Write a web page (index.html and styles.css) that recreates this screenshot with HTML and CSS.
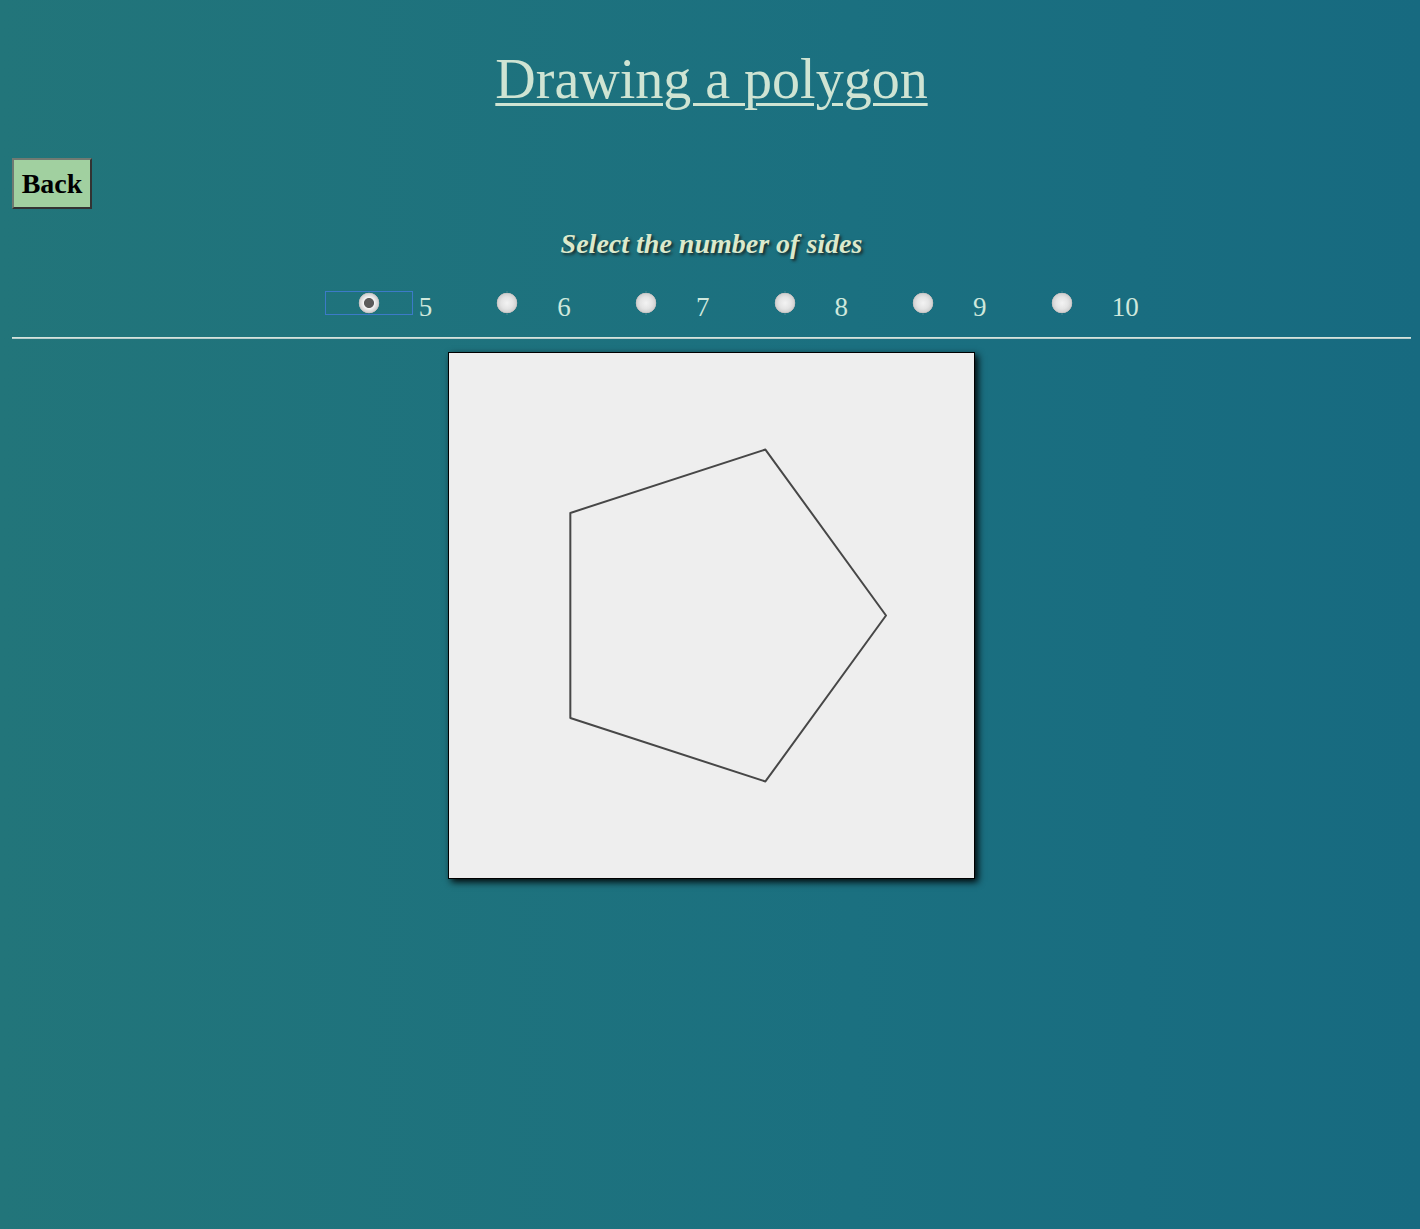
FILE: index.html
```html
<!DOCTYPE html>
<html lang="en">
<head>
<meta charset="utf-8">
<title>Drawing a polygon</title>
<link rel="stylesheet" href="styles.css">
</head>
<body>
<h1 class="title"><a href="#">Drawing a polygon</a></h1>
<div class="back-row"><button class="back">Back</button></div>
<h2 class="prompt">Select the number of sides</h2>
<div class="sides">
  <label class="side"><input type="radio" name="sides" class="radio focused" checked><span class="num">5</span></label>
  <label class="side"><input type="radio" name="sides" class="radio"><span class="num">6</span></label>
  <label class="side"><input type="radio" name="sides" class="radio"><span class="num">7</span></label>
  <label class="side"><input type="radio" name="sides" class="radio"><span class="num">8</span></label>
  <label class="side"><input type="radio" name="sides" class="radio"><span class="num">9</span></label>
  <label class="side"><input type="radio" name="sides" class="radio"><span class="num">10</span></label>
</div>
<hr class="rule">
<div class="stage">
  <svg class="canvas" width="525" height="525" viewBox="0 0 525 525">
    <polygon points="437,262.5 316.42,96.54 121.33,159.93 121.33,365.07 316.42,428.46" fill="none" stroke="#474747" stroke-width="2" stroke-linejoin="round"/>
  </svg>
</div>
</body>
</html>
```
FILE: styles.css
```css
html, body {
  margin: 0;
  min-height: 100%;
}
body {
  padding: 0 9px 0 12px;
  min-height: 1229px;
  box-sizing: border-box;
  background: linear-gradient(90deg, #22757a 0%, #1b7080 60%, #176a80 100%);
  font-family: "Liberation Serif", "Times New Roman", serif;
  color: #d4e8d8;
}
.title {
  margin: 0;
  padding-top: 47px;
  text-align: center;
  font-size: 56px;
  font-weight: normal;
  line-height: 64px;
}
.title a {
  color: #cfe4d3;
  text-decoration: underline;
  text-decoration-thickness: 3px;
  text-underline-offset: 5px;
}
.back-row {
  margin-top: 47px;
}
.back {
  font-family: "Liberation Serif", "Times New Roman", serif;
  font-weight: bold;
  font-size: 28px;
  width: 80px;
  height: 51px;
  padding: 0;
  background: #a1d0a0;
  color: #000;
  border: 2px solid;
  border-color: #707a72 #333 #333 #707a72;
  cursor: pointer;
}
.prompt {
  margin: 15px 0 0;
  text-align: center;
  font-size: 28px;
  font-style: italic;
  font-weight: bold;
  line-height: 40px;
  color: #dbe9cc;
  text-shadow: 2px 2px 3px #1a2a2a;
}
.sides {
  display: flex;
  justify-content: center;
  margin: 27px 0 0 58px;
  height: 34px;
}
.side {
  display: flex;
  align-items: flex-start;
  width: 138.6px;
}
.radio {
  appearance: none;
  -webkit-appearance: none;
  margin: 0;
  width: 88px;
  height: 24px;
  border: 1px solid transparent;
  box-sizing: border-box;
  background: radial-gradient(circle 10.5px at 50% 50%, #f3f3f3 0, #e4e4e4 6px, #d2d2d2 9.2px, #b9b9b9 10px, rgba(0,0,0,0) 10.6px);
}
.radio:checked {
  background: radial-gradient(circle 10.5px at 50% 50%, #5b5b5b 0, #5b5b5b 4.6px, #f6f6f6 5.4px, #e6e6e6 7px, #d2d2d2 9.2px, #b9b9b9 10px, rgba(0,0,0,0) 10.6px);
}
.radio.focused {
  border-color: #3c7ac8;
}
.num {
  margin-left: 6px;
  font-size: 27px;
  line-height: 30px;
  margin-top: 1px;
  color: #cfe8dc;
}
.rule {
  margin: 12px 0 0;
  height: 0;
  border: 0;
  border-top: 1px solid #d4e4dc;
  border-bottom: 1px solid #b6cccc;
}
.stage {
  display: flex;
  justify-content: center;
  margin-top: 13px;
}
.canvas {
  display: block;
  background: #eeeeee;
  border: 1px solid #000;
  box-shadow: 3px 3px 7px rgba(0,0,0,0.95);
}
```
